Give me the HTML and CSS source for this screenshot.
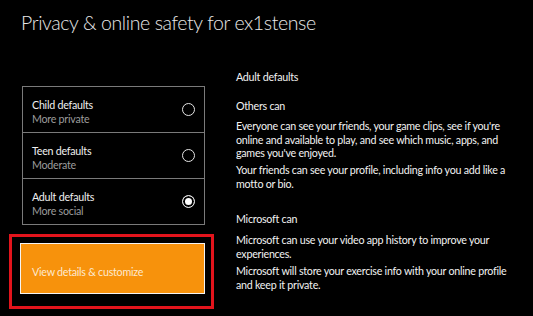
FILE: index.html
```html
<!DOCTYPE html>
<html lang="en">
<head>
<meta charset="utf-8">
<title>Privacy &amp; online safety</title>
<link rel="stylesheet" href="styles.css">
</head>
<body>
<div class="page">
  <h1 class="title">Privacy &amp; online safety for ex1stense</h1>
  <div class="main">
    <div class="left">
      <ul class="options">
        <li class="option">
          <p class="opt-text"><span class="opt-name">Child defaults</span><br><span class="opt-sub">More private</span></p>
          <span class="radio"></span>
        </li>
        <li class="option">
          <p class="opt-text"><span class="opt-name">Teen defaults</span><br><span class="opt-sub">Moderate</span></p>
          <span class="radio"></span>
        </li>
        <li class="option">
          <p class="opt-text"><span class="opt-name">Adult defaults</span><br><span class="opt-sub">More social</span></p>
          <span class="radio checked"></span>
        </li>
      </ul>
      <div class="highlight">
        <button class="customize">View details &amp; customize</button>
      </div>
    </div>
    <div class="right">
      <p class="heading">Adult defaults</p>
      <p class="section others">Others can</p>
      <p class="para p1">Everyone can see your friends, your game clips, see if you're online and available to play, and see which music, apps, and games you've enjoyed.</p>
      <p class="para p2">Your friends can see your profile, including info you add like a motto or bio.</p>
      <p class="section ms">Microsoft can</p>
      <p class="para p3">Microsoft can use your video app history to improve your experiences.</p>
      <p class="para p4">Microsoft will store your exercise info with your online profile and keep it private.</p>
    </div>
  </div>
</div>
</body>
</html>
```

FILE: styles.css
```css
html, body {
  margin: 0;
  padding: 0;
  background: #000;
}
body {
  width: 533px;
  height: 316px;
  overflow: hidden;
  font-family: Lato, "Open Sans", sans-serif;
  color: #f2f2f2;
  font-size: 10.7px;
  letter-spacing: -0.25px;
}
.title {
  margin: 0 0 32px 0;
  padding: 8px 0 0 21px;
  font-size: 19.5px;
  line-height: 30px;
  font-weight: 300;
  letter-spacing: -0.4px;
  color: #e8e8e8;
}
.main {
  display: flex;
}
.left {
  width: 205px;
  padding-left: 9px;
  flex: none;
}
.options {
  list-style: none;
  margin: 16px 0 0 13px;
  padding: 0;
  width: 181px;
  border: 1px solid #7a7a7a;
}
.option {
  height: 45px;
  display: flex;
  align-items: center;
  justify-content: space-between;
  padding: 0 9px;
  border-top: 1px solid #7a7a7a;
}
.option:first-child {
  border-top: none;
}
.opt-text {
  margin: 0;
  line-height: 14px;
  padding-top: 4px;
}
.opt-name {
  color: #f0f0f0;
}
.opt-sub {
  color: #9c9c9c;
}
.radio {
  width: 11px;
  height: 11px;
  border: 1.5px solid #e6e6e6;
  border-radius: 50%;
  flex: none;
  box-sizing: content-box;
}
.radio.checked {
  background: #fff;
  box-shadow: inset 0 0 0 2px #000;
}
.highlight {
  box-sizing: border-box;
  margin-top: 9px;
  width: 205px;
  border: 3px solid #e2141c;
  padding: 6px 6px 12px 8px;
}
.customize {
  display: block;
  box-sizing: border-box;
  width: 185px;
  height: 51px;
  margin: 0;
  border: 1px solid #f4f4f4;
  background: #f7920c;
  color: #fde9cf;
  font-family: inherit;
  font-size: 10.7px;
  letter-spacing: -0.25px;
  text-align: left;
  padding: 5px 0 0 11px;
}
.right {
  margin-left: 22px;
}
.right p {
  margin: 0;
  line-height: 13.5px;
  width: 285px;
}
.section.others { margin-top: 15.5px; }
.para.p1 { margin-top: 6.5px; }
.para.p2 { margin-top: 3.5px; }
.section.ms { margin-top: 22px; }
.para.p3 { margin-top: 7.5px; }
.para.p4 { margin-top: 4px; }
```
